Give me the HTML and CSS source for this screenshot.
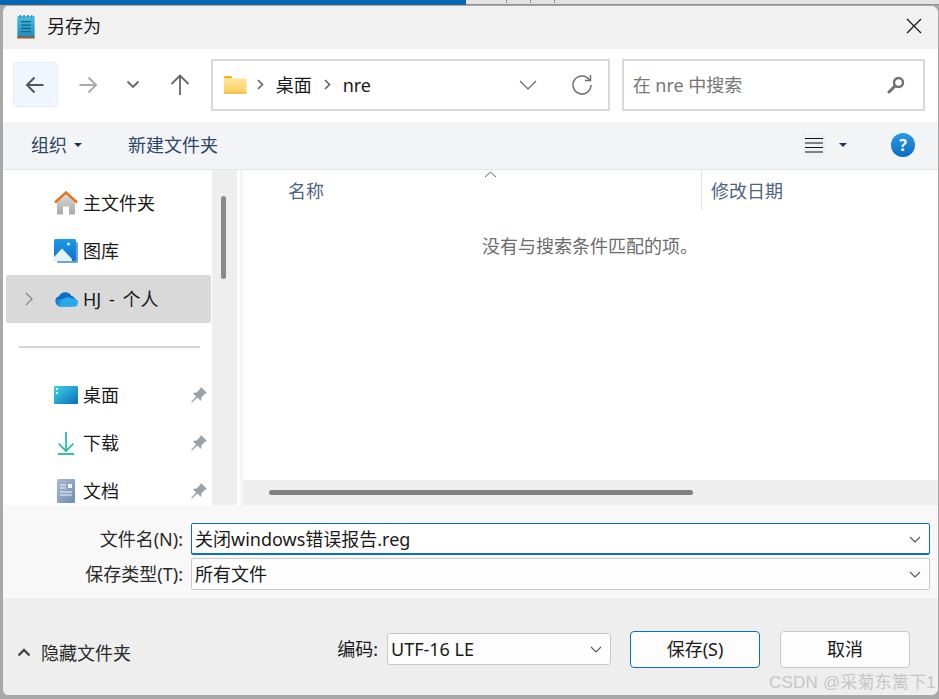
FILE: index.html
```html
<!DOCTYPE html>
<html lang="zh-CN">
<head>
    <meta charset="UTF-8">
    <title>另存为</title>
    <link rel="stylesheet" href="styles.css">
</head>
<body>
  <!-- Behind the dialog -->
  <div class="backdrop">
    <div class="backdrop-blue"></div>
    <div class="backdrop-grey"><i></i><i></i><i></i></div>
  </div>

  <div class="window">
    <!-- Title bar -->
    <div class="titlebar">
      <svg class="title-icon" width="20" height="25" viewBox="0 0 20 26">
        <defs>
          <linearGradient id="noteFill" x1="0" y1="0" x2="0" y2="1">
            <stop offset="0" stop-color="#4cc0e0"/>
            <stop offset="1" stop-color="#1a88b8"/>
          </linearGradient>
        </defs>
        <rect x="1" y="2" width="18" height="23" rx="1" fill="url(#noteFill)"/>
        <rect x="1" y="23.5" width="18" height="2" fill="#a4562a"/>
        <path d="M4 1v3M8 1v3M12 1v3M16 1v3" stroke="#3a8fb0" stroke-width="1.6"/>
        <path d="M5 8h10M5 11.5h10M5 15h10M5 18.5h10" stroke="#0d5f86" stroke-width="1.2"/>
      </svg>
      <span class="title-text">另存为</span>
      <svg class="close-icon" width="16" height="16" viewBox="0 0 16 16">
        <path d="M1 1l14 14M15 1L1 15" stroke="#1a1a1a" stroke-width="1.3" fill="none"/>
      </svg>
    </div>

    <!-- Navigation bar -->
    <div class="navbar">
      <div class="nav-btn nav-back">
        <svg width="20" height="18" viewBox="0 0 20 18"><path d="M18.5 9H2M9.5 1.5L2 9l7.500 7.500" stroke="#555" stroke-width="2" fill="none"/></svg>
      </div>
      <div class="nav-btn nav-fwd">
        <svg width="20" height="18" viewBox="0 0 20 18"><path d="M1.500 9H18M10.500 1.500L18 9l-7.500 7.500" stroke="#aaa" stroke-width="2" fill="none"/></svg>
      </div>
      <div class="nav-btn nav-recent">
        <svg width="14" height="9" viewBox="0 0 14 9"><path d="M1.500 1.500L7 7l5.500-5.500" stroke="#666" stroke-width="1.800" fill="none"/></svg>
      </div>
      <div class="nav-btn nav-up">
        <svg width="20" height="22" viewBox="0 0 20 22"><path d="M10 21V2M1.500 10L10 1.500 18.500 10" stroke="#666" stroke-width="1.800" fill="none"/></svg>
      </div>

      <div class="address">
        <svg width="23" height="18" viewBox="0 0 23 18">
          <defs>
            <linearGradient id="folderFill" x1="0" y1="0" x2="0" y2="1">
              <stop offset="0" stop-color="#ffe79a"/>
              <stop offset="1" stop-color="#fbcf5c"/>
            </linearGradient>
          </defs>
          <path d="M0 1.500C0 .7.500 0 1.300 0h5.700l2 2.500H0z" fill="#f2b01e"/>
          <rect x="0" y="2.500" width="22.500" height="15" fill="url(#folderFill)"/>
          <rect x="0" y="16.500" width="22.500" height="1" fill="#e0a92c"/>
        </svg>
        <svg class="crumb-sep crumb-first" width="7" height="11" viewBox="0 0 7 11"><path d="M1 1l4.500 4.500L1 10" stroke="#666" stroke-width="1.700" fill="none"/></svg>
        <span>桌面</span>
        <svg class="crumb-sep" width="7" height="11" viewBox="0 0 7 11"><path d="M1 1l4.500 4.500L1 10" stroke="#666" stroke-width="1.700" fill="none"/></svg>
        <span>nre</span>
        <svg class="address-drop" width="18" height="10" viewBox="0 0 18 10"><path d="M1 1l8 8 8-8" stroke="#666" stroke-width="1.200" fill="none"/></svg>
        <svg class="address-refresh" width="22" height="22" viewBox="0 0 22 22"><path d="M18.500 6A9 9 0 1 0 20 11" stroke="#707070" stroke-width="1.500" fill="none"/><path d="M19.500 1v5.500H14" stroke="#707070" stroke-width="1.500" fill="none"/></svg>
      </div>

      <div class="search">
        <span class="search-text">在 nre 中搜索</span>
        <svg width="18" height="18" viewBox="0 0 18 18"><circle cx="11.500" cy="6.500" r="4.500" stroke="#707070" stroke-width="2.400" fill="none"/><path d="M8 10l-6 6" stroke="#707070" stroke-width="3" stroke-linecap="round"/></svg>
      </div>
    </div>

    <!-- Toolbar -->
    <div class="toolbar">
      <span>组织</span>
      <span class="caret caret-org"></span>
      <span class="tool-new">新建文件夹</span>
      <div class="view-btn">
        <svg width="20" height="16" viewBox="0 0 20 16"><path d="M1 1.500h18M1 6h18M1 10.500h18M1 15h18" stroke="#111" stroke-width="1"/></svg>
      </div>
      <span class="caret caret-view"></span>
      <div class="help">?</div>
    </div>

    <!-- Side list and file list -->
    <div class="main">
      <div class="sidebar">
        <div class="side-item">
          <svg class="side-icon" width="24" height="24" viewBox="0 0 24 24">
            <defs>
              <linearGradient id="houseFill" x1="0" y1="0" x2="0" y2="1">
                <stop offset="0" stop-color="#dcdcdc"/>
                <stop offset="1" stop-color="#a8a8a8"/>
              </linearGradient>
            </defs>
            <path d="M3 11L12 3l9 8v11.500a1 1 0 0 1-1 1h-5v-8H9v8H4a1 1 0 0 1-1-1z" fill="url(#houseFill)"/>
            <path d="M1 11.500L12 1.500l11 10" stroke="#e8710f" stroke-width="2.400" fill="none"/>
          </svg>
          <span>主文件夹</span>
        </div>
        <div class="side-item">
          <svg class="side-icon" width="24" height="24" viewBox="0 0 24 24">
            <defs>
              <linearGradient id="picFill" x1="0" y1="0" x2="0" y2="1">
                <stop offset="0" stop-color="#1a9be8"/>
                <stop offset="1" stop-color="#1270c8"/>
              </linearGradient>
            </defs>
            <rect x="3" y="3" width="21" height="21" rx="1.500" fill="#6fa3d8"/>
            <rect x="0" y="0" width="22" height="22" rx="1.500" fill="url(#picFill)"/>
            <path d="M0 18l8-8.500 10 10.500v2H1.500A1.500 1.500 0 0 1 0 20.500z" fill="#e3f2fc"/>
            <circle cx="14.500" cy="5" r="1.500" fill="#e3f2fc"/>
          </svg>
          <span>图库</span>
        </div>
        <div class="side-item side-selected">
          <svg class="side-expand" width="8" height="14" viewBox="0 0 8 14"><path d="M1 1l6 6-6 6" stroke="#8a8a8a" stroke-width="1.400" fill="none"/></svg>
          <svg class="side-icon" width="24" height="16" viewBox="0 0 24 16">
            <path d="M6 15a5 5 0 0 1-1-9.800A7 7 0 0 1 17.500 5 5.500 5.500 0 0 1 19 15z" fill="#0f6cc4"/>
            <path d="M5 15.500A5 5 0 0 1 3 8.500l6-1 8 8z" fill="#1a88dc"/>
            <path d="M9 8l4-2 6 1.500a4.500 4.500 0 0 1 5 3.500c0 3-1.500 4.800-4 4.800H5c1-4 2-7.800 4-7.800z" fill="#28a8ea"/>
          </svg>
          <span class="side-account">HJ - 个人</span>
        </div>
        <div class="side-divider"></div>
        <div class="side-item">
          <svg class="side-icon" width="24" height="18" viewBox="0 0 24 18">
            <defs>
              <linearGradient id="deskFill" x1="0" y1="0" x2="1" y2="1">
                <stop offset="0" stop-color="#3cd4e8"/>
                <stop offset="1" stop-color="#0c6cb8"/>
              </linearGradient>
            </defs>
            <rect width="24" height="18" rx="1" fill="url(#deskFill)"/>
            <rect x="2" y="2" width="2" height="2" fill="#e8fbff"/>
            <rect x="2" y="6" width="2" height="2" fill="#e8fbff"/>
          </svg>
          <span>桌面</span>
          <svg class="pin" width="16" height="16" viewBox="0 0 16 16"><path d="M10 0l6 6-2 .800-3.500 3.500L10 14 6.500 10.500 1 15.500 0 15l5-5.500L1.800 6l3.700-.500L9 2z" fill="#98a2a8"/></svg>
        </div>
        <div class="side-item">
          <svg class="side-icon" width="24" height="24" viewBox="0 0 24 24"><path d="M12 1v19M4.500 12.500L12 20l7.500-7.500" stroke="#22b8a0" stroke-width="1.700" fill="none"/><path d="M4 23h16" stroke="#22b8a0" stroke-width="1.800"/></svg>
          <span>下载</span>
          <svg class="pin" width="16" height="16" viewBox="0 0 16 16"><path d="M10 0l6 6-2 .800-3.500 3.500L10 14 6.500 10.500 1 15.500 0 15l5-5.500L1.800 6l3.700-.500L9 2z" fill="#98a2a8"/></svg>
        </div>
        <div class="side-item">
          <svg class="side-icon" width="24" height="24" viewBox="0 0 24 24">
            <defs>
              <linearGradient id="docFill" x1="0" y1="0" x2="1" y2="1">
                <stop offset="0" stop-color="#a8bcd4"/>
                <stop offset="1" stop-color="#6f8cae"/>
              </linearGradient>
            </defs>
            <rect x="3" y="0" width="18" height="24" rx="1.500" fill="url(#docFill)"/>
            <path d="M6 6h6M6 9h6M6 13h12M6 16h12" stroke="#f2f6fa" stroke-width="1.100"/>
            <rect x="14" y="5" width="4" height="4" fill="#f2f6fa"/>
          </svg>
          <span>文档</span>
          <svg class="pin" width="16" height="16" viewBox="0 0 16 16"><path d="M10 0l6 6-2 .800-3.500 3.500L10 14 6.500 10.500 1 15.500 0 15l5-5.500L1.800 6l3.700-.500L9 2z" fill="#98a2a8"/></svg>
        </div>
      </div>

      <div class="side-scroll"><div class="side-thumb"></div></div>
      <div class="splitter"></div>

      <div class="files">
        <div class="file-head">
          <span class="col-name">名称</span>
          <svg class="sort-mark" width="13" height="7" viewBox="0 0 13 7"><path d="M1 6l5.500-5L12 6" stroke="#666" stroke-width="1" fill="none"/></svg>
          <span class="col-date">修改日期</span>
        </div>
        <div class="file-empty">没有与搜索条件匹配的项。</div>
        <div class="hscroll"><div class="hthumb"></div></div>
      </div>
    </div>

    <!-- File name and type -->
    <div class="form">
      <label class="form-label">文件名(N):</label>
      <div class="combo combo-active">
        <span>关闭windows错误报告.reg</span>
        <svg width="12" height="7" viewBox="0 0 12 7"><path d="M1 1l5 5 5-5" stroke="#555" stroke-width="1.100" fill="none"/></svg>
      </div>
      <label class="form-label">保存类型(T):</label>
      <div class="combo">
        <span>所有文件</span>
        <svg width="12" height="7" viewBox="0 0 12 7"><path d="M1 1l5 5 5-5" stroke="#555" stroke-width="1.100" fill="none"/></svg>
      </div>
    </div>

    <!-- Footer -->
    <div class="footer">
      <svg class="hide-arrow" width="14" height="9" viewBox="0 0 14 9"><path d="M1.500 7.500L7 2l5.500 5.500" stroke="#444" stroke-width="2.400" fill="none"/></svg>
      <span class="hide-text">隐藏文件夹</span>
      <span class="enc-label">编码:</span>
      <div class="combo enc-combo">
        <span>UTF-16 LE</span>
        <svg width="12" height="7" viewBox="0 0 12 7"><path d="M1 1l5 5 5-5" stroke="#555" stroke-width="1.100" fill="none"/></svg>
      </div>
      <button class="btn btn-primary">保存(S)</button>
      <button class="btn">取消</button>
    </div>

    <div class="watermark">CSDN @采菊东篱下1</div>
    <i class="peek peek-a"></i>
    <i class="peek peek-b"></i>
    <i class="peek peek-c"></i>
  </div>
</body>
</html>
```

FILE: styles.css
```css
/* Global Styles */
* {
    box-sizing: border-box;
}

html, body {
    margin: 0;
    padding: 0;
    width: 939px;
    height: 699px;
    overflow: hidden;
}

body {
    background-color: #a8a8a8;
    font-family: "Noto Sans", "Noto Sans CJK SC", sans-serif;
    font-size: 18px;
    line-height: 24px;
    color: #1a1a1a;
}

svg {
    display: block;
    flex-shrink: 0;
}

/* Backdrop */
.backdrop {
    display: flex;
    height: 5px;
}

.backdrop-blue {
    width: 466px;
    background-color: #0067b8;
    border-bottom: 1px solid #3f6480;
}

.backdrop-grey {
    flex: 1;
    display: flex;
    gap: 23px;
    padding-left: 40px;
    background-color: #e4e4e4;
    border-bottom: 1px solid #8f8f8f;
}

.backdrop-grey i {
    width: 1px;
    height: 4px;
    background: repeating-linear-gradient(#666 0 1px, transparent 1px 2px);
}

/* Window */
.window {
    position: relative;
    height: 691px;
    overflow: hidden;
    border-style: solid;
    border-color: #a8a8a8;
    border-width: 1px 1px 1px 3px;
    border-radius: 8px;
    background-color: #fff;
}

.titlebar {
    display: flex;
    align-items: center;
    height: 43px;
    padding: 0 16px 3px 13px;
    background-color: #f1f1f1;
}

.title-text {
    margin-left: 11px;
    flex: 1;
}

/* Navigation bar */
.navbar {
    display: flex;
    align-items: center;
    height: 73px;
    padding: 0 13px 2px 10px;
}

.nav-btn {
    display: flex;
    align-items: center;
    justify-content: center;
    height: 45px;
}

.nav-back {
    width: 45px;
    background-color: #eff6fd;
    border: 1px solid #e3effa;
    border-radius: 4px;
}

.nav-fwd {
    width: 30px;
    margin-left: 15px;
}

.nav-recent {
    width: 30px;
    margin-left: 15px;
}

.nav-up {
    width: 30px;
    margin-left: 17px;
    margin-right: 16px;
}

.address {
    display: flex;
    align-items: center;
    width: 399px;
    height: 52px;
    padding: 0 15px 0 11px;
    border: 2px solid #d9d9d9;
    flex-shrink: 0;
}

.crumb-sep {
    margin: 0 12px;
}

.crumb-first {
    margin-left: 10px;
}

.address-drop {
    margin-left: auto;
}

.address-refresh {
    margin-left: 34px;
}

.search {
    display: flex;
    align-items: center;
    justify-content: space-between;
    width: 304px;
    height: 52px;
    margin-left: 12px;
    padding: 0 18px 0 9px;
    border: 2px solid #d9d9d9;
}

.search-text {
    color: #767676;
}

/* Toolbar */
.toolbar {
    display: flex;
    align-items: center;
    height: 48px;
    padding: 0 23px 1px 28px;
    background-color: #f3f4f6;
    border-bottom: 1px solid #e4e5e7;
    color: #2c4668;
}

.caret {
    width: 0;
    height: 0;
    border-left: 4px solid transparent;
    border-right: 4px solid transparent;
    border-top: 4px solid #1f3557;
}

.caret-org {
    margin-left: 7px;
}

.tool-new {
    margin-left: 46px;
}

.view-btn {
    display: flex;
    align-items: center;
    justify-content: center;
    width: 24px;
    height: 24px;
    margin-left: auto;
    background-color: #f0f1f2;
}

.caret-view {
    margin-left: 13px;
}

.help {
    width: 24px;
    height: 24px;
    margin-left: 44px;
    border-radius: 50%;
    background: linear-gradient(#2a9be6, #0a6cc4);
    color: #fff;
    font-size: 16px;
    font-weight: bold;
    line-height: 24px;
    text-align: center;
}

/* Main area */
.main {
    display: flex;
    height: 335px;
}

.sidebar {
    width: 209px;
    padding-top: 9px;
    overflow: hidden;
    flex-shrink: 0;
}

.side-item {
    position: relative;
    display: flex;
    align-items: center;
    height: 48px;
    margin-left: 3px;
    padding-left: 48px;
    border-radius: 2px;
}

.side-item span {
    margin-left: 5px;
}

.side-icon {
    width: 24px;
}

.side-selected {
    width: 205px;
    background-color: #d9d9d9;
}

.side-expand {
    position: absolute;
    left: 19px;
    top: 17px;
}

.side-account {
    word-spacing: 3px;
}

.side-divider {
    height: 2px;
    margin: 23px 12px 23px 16px;
    background-color: #d6d6d6;
}

.pin {
    position: absolute;
    left: 185px;
    top: 16px;
}

.side-scroll {
    width: 25px;
    padding: 26px 0 0 9px;
    background-color: #eeeeee;
    flex-shrink: 0;
}

.side-thumb {
    width: 5px;
    height: 83px;
    border-radius: 3px;
    background-color: #8a8a8a;
}

.splitter {
    width: 6px;
    border-left: 3px solid #fff;
    background-color: #f5f5f5;
    flex-shrink: 0;
}

.files {
    position: relative;
    display: flex;
    flex-direction: column;
    flex: 1;
    min-width: 0;
}

.file-head {
    position: relative;
    height: 40px;
    padding: 9px 0 0 45px;
    color: #4d6382;
}

.sort-mark {
    position: absolute;
    left: 241px;
    top: 1px;
}

.col-date {
    position: absolute;
    left: 458px;
    top: 0;
    height: 40px;
    padding: 9px 0 0 9px;
    border-left: 1px solid #e4e4e4;
}

.file-empty {
    flex: 1;
    padding: 24px 0 0 239px;
    color: #6b6b6b;
}

.hscroll {
    height: 25px;
    padding: 10px 0 0 26px;
    background-color: #eeeeee;
}

.hthumb {
    width: 424px;
    height: 5px;
    border-radius: 3px;
    background-color: #808080;
}

/* Form */
.form {
    display: grid;
    grid-template-columns: 180px 739px;
    column-gap: 8px;
    row-gap: 3px;
    align-items: center;
    height: 93px;
    padding-top: 18px;
    align-content: start;
    background-color: #f8f8f8;
}

.form-label {
    text-align: right;
    color: #2a2a2a;
}

.combo {
    display: flex;
    align-items: center;
    justify-content: space-between;
    height: 32px;
    padding: 0 8px 0 3px;
    background-color: #fdfdfd;
    border: 1px solid #c8c8c8;
    border-radius: 2px;
}

.combo-active {
    background-color: #fff;
    border-color: #0a6fc2;
    box-shadow: inset 0 -1px 0 #0a6fc2;
}

/* Footer */
.footer {
    display: flex;
    align-items: center;
    height: 97px;
    padding-top: 11px;
    padding-right: 28px;
    background-color: #eeeeee;
}

.hide-arrow {
    margin-left: 14px;
}

.hide-text {
    margin-left: 10px;
    margin-top: 2px;
    color: #2a2a2a;
}

.enc-label {
    margin-left: auto;
    margin-top: -6px;
}

.enc-combo {
    width: 224px;
    margin-left: 9px;
    margin-top: -6px;
    border-radius: 3px;
}

.btn {
    width: 130px;
    height: 37px;
    margin-left: 20px;
    margin-top: -6px;
    padding: 0;
    background-color: #fdfdfd;
    border: 1px solid #c8c8c8;
    border-radius: 4px;
    font: inherit;
    color: #1a1a1a;
}

.btn-primary {
    margin-left: 19px;
    border-color: #0a6fc2;
}

/* Over the content */
.watermark {
    position: absolute;
    right: 2px;
    bottom: 0;
    font-family: "Liberation Sans", "Noto Sans CJK SC", sans-serif;
    font-size: 17px;
    letter-spacing: 0.2px;
    color: #c6c6c6;
}

.peek {
    position: absolute;
    right: -1px;
    width: 1px;
    background-color: #a86a1e;
}

.peek-a {
    top: 216px;
    height: 14px;
}

.peek-b {
    top: 315px;
    height: 15px;
}

.peek-c {
    top: 420px;
    height: 8px;
    background-color: #2a3a50;
}
```
